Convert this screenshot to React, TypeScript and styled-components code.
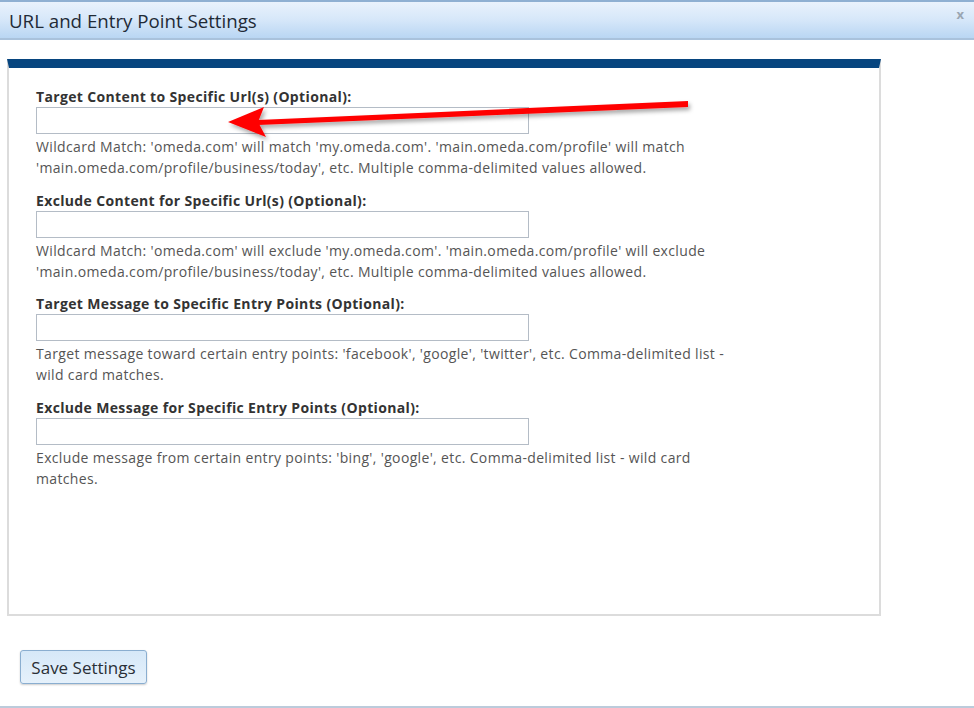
import React from 'react';
import styled, { createGlobalStyle } from 'styled-components';

const GlobalStyle = createGlobalStyle`
  html, body {
    margin: 0;
    padding: 0;
    background: #fff;
    font-family: 'Open Sans', 'Liberation Sans', Arial, sans-serif;
  }
`;

const Dialog = styled.div`
  position: relative;
  width: 974px;
  height: 708px;
  display: flex;
  flex-direction: column;
  overflow: hidden;
  border-bottom: 2px solid #bccbdb;
  box-sizing: border-box;
`;

const TitleBar = styled.div`
  height: 40px;
  box-sizing: border-box;
  border-top: 2px solid #8fb0d2;
  border-bottom: 2px solid #a9c2dc;
  background: linear-gradient(to bottom, #e9f2fc 0%, #d6e7f9 50%, #b9d6f3 100%);
  display: flex;
  align-items: center;
  justify-content: space-between;
  padding: 0 10px 0 9px;
`;

const Title = styled.h1`
  margin: 0;
  font-size: 18.7px;
  font-weight: 400;
  color: #1f2a36;
`;

const Close = styled.span`
  font-size: 13px;
  font-weight: 700;
  color: #9aa6b2;
  margin-top: -12px;
`;

const Body = styled.div`
  flex: 1;
  padding: 19px 93px 0 7px;
  display: flex;
  flex-direction: column;
`;

const Panel = styled.div`
  height: 557px;
  box-sizing: border-box;
  border: 2px solid #dcdcdc;
  border-top: 9px solid #07457f;
  padding: 18px 0 0 27px;
`;

const Field = styled.div`
  display: flex;
  flex-direction: column;
  margin-bottom: 11.5px;
`;

const Label = styled.label`
  font-size: 14px;
  font-weight: 700;
  line-height: 21px;
  letter-spacing: 0.35px;
  color: #333;
`;

const Input = styled.input`
  width: 493px;
  height: 27px;
  box-sizing: border-box;
  border: 1px solid #b4bcc6;
  margin: 0;
  padding: 2px 4px;
`;

const Help = styled.p`
  margin: 2px 0 0;
  width: 700px;
  font-size: 14px;
  line-height: 21px;
  letter-spacing: 0.35px;
  color: #555;
`;

const Footer = styled.div`
  padding: 34px 0 0 13px;
`;

const SaveButton = styled.button`
  width: 127px;
  height: 34px;
  border: 1px solid #8aaed0;
  border-radius: 3px;
  background: linear-gradient(to bottom, #d6e8f8 0%, #e6f1fb 100%);
  box-shadow: 0 1px 2px rgba(0, 0, 0, 0.2);
  font-family: 'Open Sans', 'Liberation Sans', Arial, sans-serif;
  font-size: 17px;
  color: #2a2f36;
  padding: 0;
`;

const ArrowLayer = styled.svg`
  position: absolute;
  left: 0;
  top: 0;
  pointer-events: none;
`;

const fields = [
  {
    label: 'Target Content to Specific Url(s) (Optional):',
    help: "Wildcard Match: 'omeda.com' will match 'my.omeda.com'. 'main.omeda.com/profile' will match 'main.omeda.com/profile/business/today', etc. Multiple comma-delimited values allowed.",
  },
  {
    label: 'Exclude Content for Specific Url(s) (Optional):',
    help: "Wildcard Match: 'omeda.com' will exclude 'my.omeda.com'. 'main.omeda.com/profile' will exclude 'main.omeda.com/profile/business/today', etc. Multiple comma-delimited values allowed.",
  },
  {
    label: 'Target Message to Specific Entry Points (Optional):',
    help: "Target message toward certain entry points: 'facebook', 'google', 'twitter', etc. Comma-delimited list - wild card matches.",
  },
  {
    label: 'Exclude Message for Specific Entry Points (Optional):',
    help: "Exclude message from certain entry points: 'bing', 'google', etc. Comma-delimited list - wild card matches.",
  },
];

const App = () => {
  return (
    <Dialog>
      <GlobalStyle />
      <TitleBar>
        <Title>URL and Entry Point Settings</Title>
        <Close>x</Close>
      </TitleBar>
      <Body>
        <Panel>
          {fields.map((f, i) => (
            <Field key={i}>
              <Label>{f.label}</Label>
              <Input type="text" />
              <Help>{f.help}</Help>
            </Field>
          ))}
        </Panel>
        <Footer>
          <SaveButton>Save Settings</SaveButton>
        </Footer>
      </Body>
      {/* annotation arrow */}
      <ArrowLayer width="974" height="708" viewBox="0 0 974 708">
        <defs>
          <filter id="sh" x="-10%" y="-50%" width="120%" height="200%">
            <feDropShadow dx="2" dy="3" stdDeviation="2" floodColor="#000" floodOpacity="0.35" />
          </filter>
        </defs>
        <g filter="url(#sh)">
          <path d="M688 101 L688 107 L258 125 L258 120 Z" fill="#f00" />
          <path d="M228 122 L264 107 L258 122 L266 137 Z" fill="#f00" />
        </g>
      </ArrowLayer>
    </Dialog>
  );
};

export default App;
